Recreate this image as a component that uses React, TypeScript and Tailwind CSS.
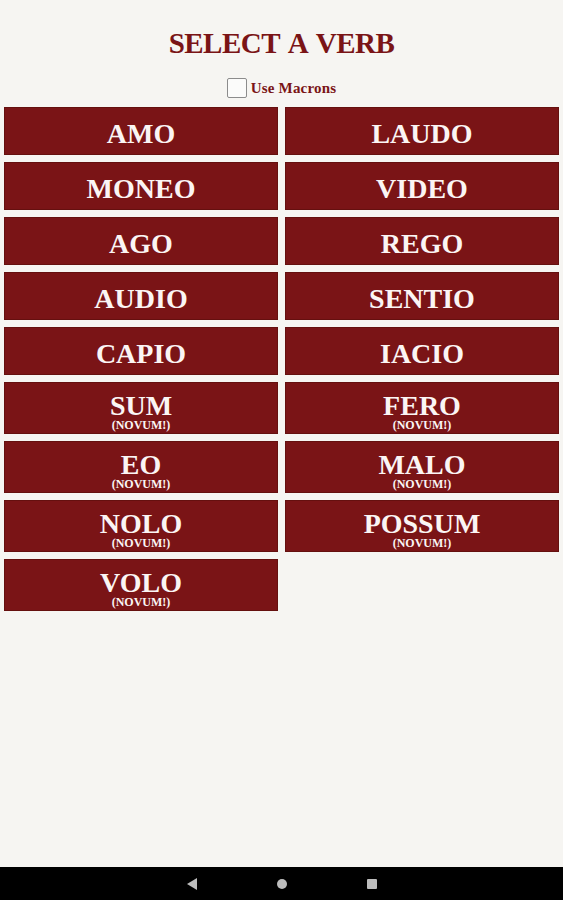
import React, { FC } from "react";

interface Verb {
    name: string
    novum?: boolean
}

const verbs: Verb[] = [
    { name: "AMO" },
    { name: "LAUDO" },
    { name: "MONEO" },
    { name: "VIDEO" },
    { name: "AGO" },
    { name: "REGO" },
    { name: "AUDIO" },
    { name: "SENTIO" },
    { name: "CAPIO" },
    { name: "IACIO" },
    { name: "SUM", novum: true },
    { name: "FERO", novum: true },
    { name: "EO", novum: true },
    { name: "MALO", novum: true },
    { name: "NOLO", novum: true },
    { name: "POSSUM", novum: true },
    { name: "VOLO", novum: true },
];

const serif = { fontFamily: '"Liberation Serif", "Times New Roman", serif' };

const VerbButton: FC<{ verb: Verb }> = ({ verb }) => {
    if (verb.novum) {
        return (
            <button className="h-[52px] flex flex-col items-center justify-start pt-[9px] bg-[#7a1416] border border-[#65100f] text-[#fbf5f4] cursor-pointer">
                <span className="text-[28px] leading-[27px] font-bold">{verb.name}</span>
                <span className="text-[12px] leading-[12px] font-bold">(NOVUM!)</span>
            </button>
        );
    }
    return (
        <button className="h-[48px] flex flex-col items-center justify-start pt-[12px] bg-[#7a1416] border border-[#65100f] text-[#fbf5f4] cursor-pointer">
            <span className="text-[28px] leading-[28px] font-bold">{verb.name}</span>
        </button>
    );
};

const App: FC = () => {
    return (
        <div className="h-screen w-full flex flex-col bg-[#f6f5f2]" style={serif}>
            <div className="flex-1 flex flex-col">
                <h1 className="pt-[28px] text-center text-[29px] leading-[30px] font-bold tracking-[-0.5px] [word-spacing:3px] text-[#7a1416]">
                    SELECT A VERB
                </h1>

                <label className="mt-[20px] h-[20px] flex justify-center items-center gap-[4px] cursor-pointer">
                    <span className="w-[20px] h-[20px] border-[1.5px] border-[#8c8c8c] rounded-[2px] bg-[#fbfbfa]"></span>
                    <span className="text-[15px] font-bold text-[#7a1416] tracking-[0.2px]">Use Macrons</span>
                </label>

                <div className="mt-[9px] px-[4px] grid grid-cols-2 gap-x-[7px] gap-y-[7px]">
                    {verbs.map((v) => (
                        <VerbButton key={v.name} verb={v} />
                    ))}
                </div>
            </div>

            {/* android nav bar */}
            <div className="h-[33px] bg-black flex justify-center items-center gap-[80px]">
                <svg width="10" height="12" viewBox="0 0 10 12">
                    <path d="M10 0 L0 6 L10 12 Z" fill="#bdbdbd" />
                </svg>
                <div className="w-[10px] h-[10px] rounded-full bg-[#bdbdbd]"></div>
                <div className="w-[10px] h-[10px] rounded-[1px] bg-[#bdbdbd]"></div>
            </div>
        </div>
    );
};

export default App;
